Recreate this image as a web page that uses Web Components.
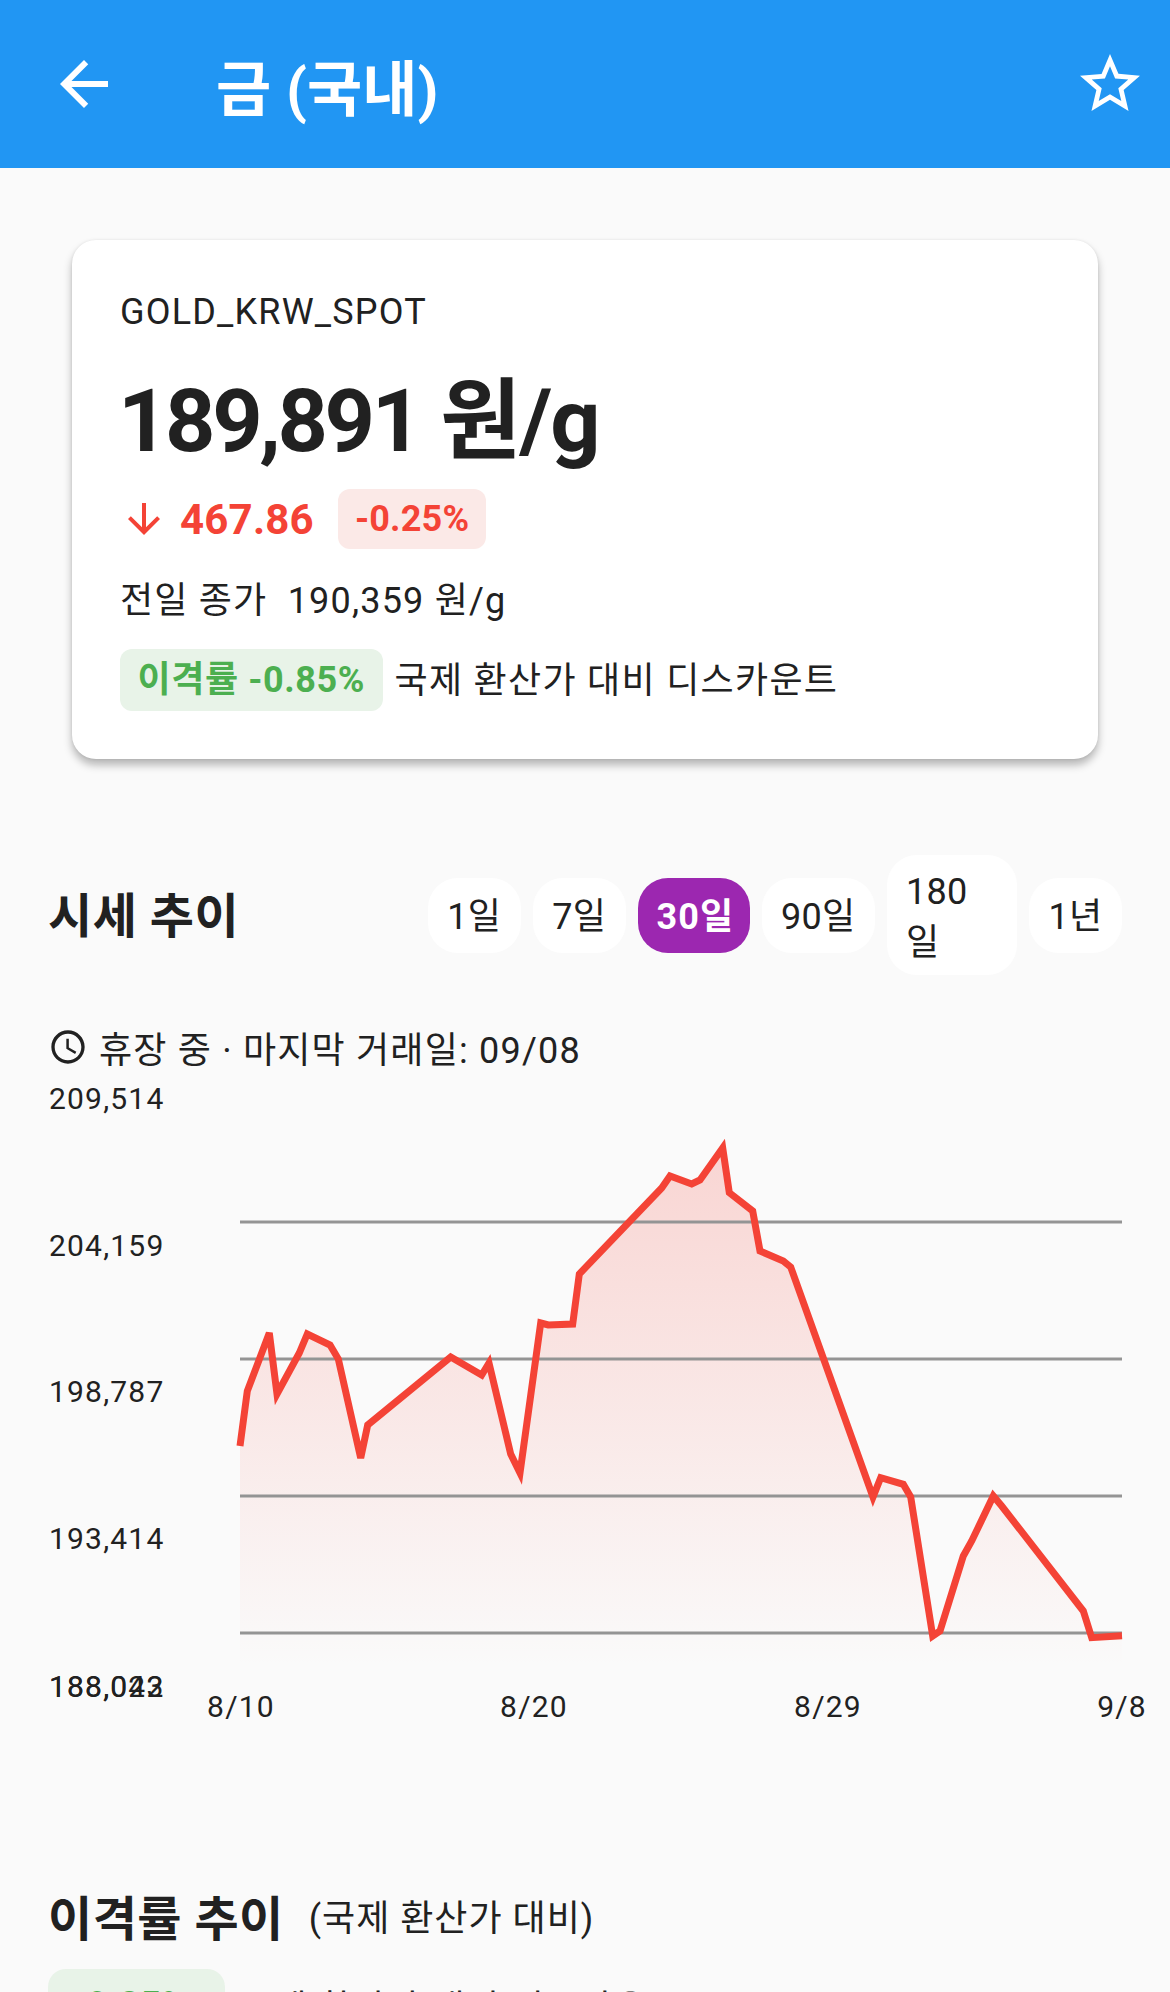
<!DOCTYPE html>
<html lang="ko">
<head>
<meta charset="utf-8">
<title>금 (국내)</title>
<style>
    html, body { margin: 0; height: 1992px; overflow: hidden; }
    body { background: #fafafa; color: #212121; font-family: Roboto, "Noto Sans CJK KR", sans-serif; }
</style>
</head>
<body>

<app-bar>금 (국내)</app-bar>

<price-card code="GOLD_KRW_SPOT" price="189,891" unit="원/g" change="467.86" percent="-0.25%"
            prev="전일 종가&nbsp;&nbsp;190,359 원/g" spread="이격률 -0.85%" note="국제 환산가 대비 디스카운트"></price-card>

<section-head class="trend">
    <span slot="title">시세 추이</span>
    <range-tabs slot="side">
        <range-tab>1일</range-tab>
        <range-tab>7일</range-tab>
        <range-tab active>30일</range-tab>
        <range-tab>90일</range-tab>
        <range-tab wrap>180일</range-tab>
        <range-tab>1년</range-tab>
    </range-tabs>
</section-head>

<market-status>휴장 중 · 마지막 거래일: 09/08</market-status>

<price-chart></price-chart>

<section-head class="spread">
    <span slot="title">이격률 추이</span>
    <span slot="sub">(국제 환산가 대비)</span>
</section-head>

<spread-note value="-0.85%">국제 환산가 대비 디스카운트</spread-note>

<script>
class AppBar extends HTMLElement {
    constructor() {
        super();
        this.attachShadow({ mode: 'open' }).innerHTML = `
        <style>
            :host { display: flex; align-items: center; height: 168px; background: #2196f3; color: #fff; padding: 0 24px 0 48px; }
            svg { width: 72px; height: 72px; fill: #fff; flex: none; }
            .title { flex: 1; margin-left: 96px; font-size: 60px; font-weight: 700; letter-spacing: 0; }
        </style>
        <svg viewBox="0 0 24 24"><path d="M20 11H7.83l5.59-5.59L12 4l-8 8 8 8 1.41-1.41L7.83 13H20v-2z"/></svg>
        <div class="title"><slot></slot></div>
        <svg viewBox="0 0 24 24"><path d="M22 9.24l-7.19-.62L12 2 9.19 8.63 2 9.24l5.46 4.73L5.82 21 12 17.27 18.18 21l-1.63-7.03L22 9.24zM12 15.4l-3.76 2.27 1-4.28-3.32-2.88 4.38-.38L12 6.1l1.71 4.04 4.38.38-3.32 2.88 1 4.28L12 15.4z"/></svg>`;
    }
}

class PriceCard extends HTMLElement {
    connectedCallback() {
        const a = n => this.getAttribute(n);
        this.attachShadow({ mode: 'open' }).innerHTML = `
        <style>
            :host { display: block; margin: 72px 72px 0; height: 519px; box-sizing: border-box; padding: 49px 48px 0; background: #fff; border-radius: 24px; box-shadow: 0 6px 9px rgba(0,0,0,.28), 0 0 3px rgba(0,0,0,.08); }
            .code { font-size: 36px; line-height: 46px; letter-spacing: 1.2px; }
            .price { margin: 36px 0 0 -2px; font-size: 88px; line-height: 100px; font-weight: 700; letter-spacing: -3.4px; word-spacing: 3px; }
            .price span { letter-spacing: -1.8px; }
            .change { display: flex; align-items: center; margin-top: 18px; height: 60px; color: #f44336; font-weight: 700; font-size: 42px; letter-spacing: .2px; }
            .change svg { width: 48px; height: 48px; fill: #f44336; margin: 0 12px 0 0; }
            .pct { margin-left: 24px; background: #fbe9e7; border-radius: 12px; padding: 0 17px; font-size: 36px; line-height: 60px; }
            .prev { margin-top: 31px; font-size: 36px; line-height: 42px; letter-spacing: 1.2px; }
            .row { display: flex; align-items: center; margin-top: 27px; font-size: 36px; letter-spacing: 1.3px; }
            .chip { background: #e8f3e8; color: #4caf50; font-weight: 700; border-radius: 12px; padding: 1px 17.5px 0; line-height: 61px; margin-right: 12px; letter-spacing: .6px; }
            .note { padding-bottom: 6px; }
        </style>
        <div class="code">${a('code')}</div>
        <div class="price">${a('price')} <span>${a('unit')}</span></div>
        <div class="change">
            <svg viewBox="0 0 24 24"><path d="M20 12l-1.41-1.41L13 16.17V4h-2v12.17l-5.58-5.59L4 12l8 8 8-8z"/></svg>
            <span>${a('change')}</span><span class="pct">${a('percent')}</span>
        </div>
        <div class="prev">${a('prev')}</div>
        <div class="row"><span class="chip">${a('spread')}</span><span class="note">${a('note')}</span></div>`;
    }
}

class SectionHead extends HTMLElement {
    constructor() {
        super();
        this.attachShadow({ mode: 'open' }).innerHTML = `
        <style>
            :host { display: flex; align-items: center; padding: 0 48px; }
            :host(.trend) { justify-content: space-between; margin-top: 96px; height: 120px; }
            :host(.spread) { margin-top: 157px; height: 60px; }
            .title { font-size: 48px; font-weight: 700; letter-spacing: .5px; padding-bottom: 6px; }
            .sub { margin-left: 25px; font-size: 36px; letter-spacing: 1px; padding-bottom: 6px; }
        </style>
        <div class="title"><slot name="title"></slot></div>
        <div class="sub"><slot name="sub"></slot></div>
        <slot name="side"></slot>`;
    }
}

class RangeTabs extends HTMLElement {
    constructor() {
        super();
        this.attachShadow({ mode: 'open' }).innerHTML = `
        <style>:host { display: flex; align-items: center; gap: 12px; }</style>
        <slot></slot>`;
    }
}

class RangeTab extends HTMLElement {
    constructor() {
        super();
        this.attachShadow({ mode: 'open' }).innerHTML = `
        <style>
            :host { display: block; box-sizing: border-box; background: #fff; border-radius: 30px; padding: 14px 19.5px 10px; font-size: 36px; line-height: 51px; letter-spacing: .3px; }
            :host([active]) { background: #9c27b0; color: #fff; font-weight: 700; letter-spacing: 1px; padding-left: 19px; padding-right: 15.5px; }
            :host([wrap]) { width: 130px; padding: 12px 19px 6px; word-break: break-all; }
        </style>
        <slot></slot>`;
    }
}

class MarketStatus extends HTMLElement {
    constructor() {
        super();
        this.attachShadow({ mode: 'open' }).innerHTML = `
        <style>
            :host { display: flex; align-items: center; margin-top: 48px; padding: 0 48px; height: 48px; font-size: 36px; letter-spacing: 1.2px; }
            svg { width: 40px; height: 40px; margin-right: 11px; fill: #212121; flex: none; }
        </style>
        <svg viewBox="0 0 24 24"><path d="M11.99 2C6.47 2 2 6.48 2 12s4.47 10 9.99 10C17.52 22 22 17.52 22 12S17.52 2 11.99 2zM12 20c-4.42 0-8-3.58-8-8s3.58-8 8-8 8 3.58 8 8-3.58 8-8 8zm.5-13H11v6l5.25 3.15.75-1.23-4.5-2.67V7z"/></svg>
        <span><slot></slot></span>`;
    }
}

// 차트 좌표는 화면 픽셀 기준 (viewBox로 맞춤)
const CHART_TOP = 1075;
const POINTS = [
    [240,1445],[247.3,1390],[269.3,1332],[277,1393],[299.3,1352],[307.3,1333],[330,1344],[338.3,1358],
    [360.7,1457],[367.7,1424],[450.7,1356],[481.7,1374],[489,1362],[510.7,1453],[520,1472],[540.7,1322],
    [548.3,1324],[572.7,1323],[579.3,1273],[661.7,1187],[670,1175],[691.7,1183],[700,1179],[722.7,1147],
    [729.3,1191.7],[752.7,1210],[760,1250],[783.3,1260],[790.7,1266],[873,1496],[880.7,1476.7],[903.3,1483.3],
    [910.7,1496],[932.7,1635],[940,1630],[963.3,1555],[971.7,1540],[993.3,1495],[1001.7,1505],[1083.3,1610],
    [1091.7,1636.7],[1122,1634.7]
];
const GRID = [1221, 1358, 1495, 1632];
const Y_LABELS = [['209,514',1098],['204,159',1245],['198,787',1391],['193,414',1538],['188,042',1686],['188,023',1686]];
const X_LABELS = [['8/10',241],['8/20',534],['8/29',828],['9/8',1122]];

class PriceChart extends HTMLElement {
    constructor() {
        super();
        const line = POINTS.map(p => p.join(',')).join(' ');
        const area = line + ' 1122,1666 240,1666';
        const grid = GRID.map(y => `<line x1="240" x2="1122" y1="${y}" y2="${y}" stroke="#949494" stroke-width="3"/>`).join('');
        const ys = Y_LABELS.map(l => `<span style="left:49px;top:${l[1] - CHART_TOP - 18}px">${l[0]}</span>`).join('');
        const xs = X_LABELS.map(l => `<span class="x" style="left:${l[1]}px;top:${1706 - CHART_TOP - 18}px">${l[0]}</span>`).join('');
        this.attachShadow({ mode: 'open' }).innerHTML = `
        <style>
            :host { display: block; position: relative; height: 655px; margin-top: 5px; font-size: 30px; letter-spacing: 1.2px; }
            svg { position: absolute; left: 240px; top: 0; width: 882px; height: 655px; overflow: visible; }
            span { position: absolute; line-height: 36px; white-space: nowrap; }
            span.x { transform: translateX(-50%); }
        </style>
        <svg viewBox="240 ${CHART_TOP} 882 655">
            <defs><linearGradient id="fade" gradientUnits="userSpaceOnUse" x1="0" x2="0" y1="1148" y2="1666">
                <stop offset="0" stop-color="#f44336" stop-opacity=".2"/>
                <stop offset="1" stop-color="#f44336" stop-opacity="0"/>
            </linearGradient></defs>
            <polygon points="${area}" fill="url(#fade)"/>
            ${grid}
            <polyline points="${line}" fill="none" stroke="#f44336" stroke-width="7" stroke-linejoin="miter" stroke-miterlimit="4"/>
        </svg>
        ${ys}${xs}`;
    }
}

class SpreadNote extends HTMLElement {
    connectedCallback() {
        this.attachShadow({ mode: 'open' }).innerHTML = `
        <style>
            :host { display: flex; align-items: center; margin-top: 21px; padding: 0 48px; font-size: 36px; letter-spacing: 1.3px; }
            .chip { background: #e8f3e8; color: #4caf50; font-weight: 700; border-radius: 18px; width: 177px; box-sizing: border-box; padding: 0 24px; line-height: 72px; margin-right: 14px; letter-spacing: .6px; }
        </style>
        <span class="chip">${this.getAttribute('value')}</span><span><slot></slot></span>`;
    }
}

customElements.define('app-bar', AppBar);
customElements.define('price-card', PriceCard);
customElements.define('section-head', SectionHead);
customElements.define('range-tabs', RangeTabs);
customElements.define('range-tab', RangeTab);
customElements.define('market-status', MarketStatus);
customElements.define('price-chart', PriceChart);
customElements.define('spread-note', SpreadNote);
</script>
</body>
</html>
